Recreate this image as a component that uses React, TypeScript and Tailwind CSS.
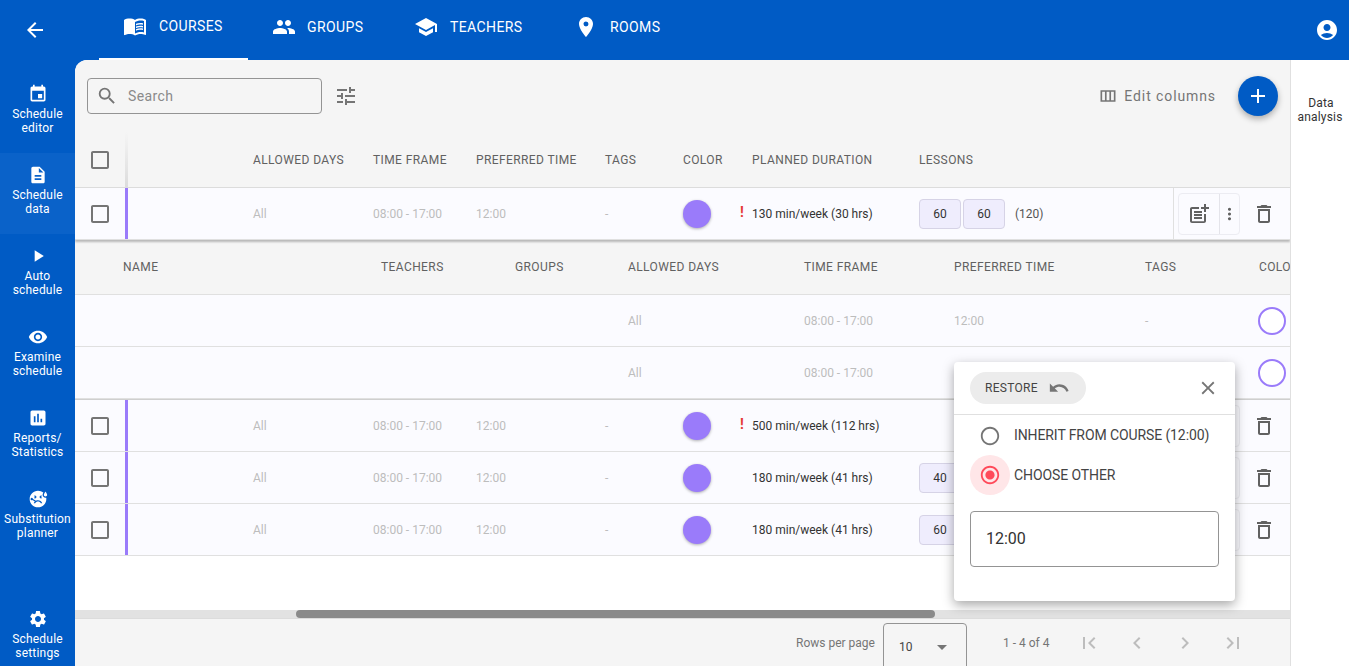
import {
  MdArrowBack,
  MdMenuBook,
  MdPeople,
  MdSchool,
  MdLocationOn,
  MdAccountCircle,
  MdEvent,
  MdDescription,
  MdPlayArrow,
  MdVisibility,
  MdAssessment,
  MdSick,
  MdSettings,
  MdSearch,
  MdTune,
  MdOutlineViewColumn,
  MdAdd,
  MdOutlinePostAdd,
  MdMoreVert,
  MdOutlineDelete,
  MdUndo,
  MdClose,
  MdFirstPage,
  MdChevronLeft,
  MdChevronRight,
  MdLastPage,
  MdArrowDropDown,
  MdCheckBoxOutlineBlank,
  MdRadioButtonUnchecked,
  MdRadioButtonChecked,
} from "react-icons/md";
import type { ReactNode } from "react";

const tabs = [
  { label: "COURSES", icon: <MdMenuBook size={24} />, cls: "w-[149px] pl-[24px] border-b-2 border-white", gap: "gap-[12px]" },
  { label: "GROUPS", icon: <MdPeople size={24} />, cls: "w-[166px] pl-[24px]", gap: "gap-[11px]" },
  { label: "TEACHERS", icon: <MdSchool size={24} />, cls: "w-[160px] pl-[0px]", gap: "gap-[12px]" },
  { label: "ROOMS", icon: <MdLocationOn size={24} />, cls: "w-[120px] pl-[0px]", gap: "gap-[12px]" },
];

const sideItems = [
  { icon: <MdEvent size={20} />, lines: ["Schedule", "editor"] },
  { icon: <MdDescription size={20} />, lines: ["Schedule", "data"], active: true },
  { icon: <MdPlayArrow size={20} />, lines: ["Auto", "schedule"] },
  { icon: <MdVisibility size={20} />, lines: ["Examine", "schedule"] },
  { icon: <MdAssessment size={20} />, lines: ["Reports/", "Statistics"] },
  { icon: <MdSick size={20} />, lines: ["Substitution", "planner"] },
];

const courseCols = "grid-cols-[50px_3px_125px_120px_103px_129px_78px_69px_167px_254px_117px]";
const lessonCols = "grid-cols-[48px_258px_134px_113px_176px_150px_191px_114px_31px]";

function SideItem({ icon, lines, active }: { icon: ReactNode; lines: string[]; active?: boolean }) {
  return (
    <div className={`flex h-[81px] flex-col items-center pt-[12px] text-white ${active ? "bg-[#0a62c9]" : ""}`}>
      {icon}
      <div className="mt-[3px] text-center text-[12px] leading-[14px] tracking-[0.2px]">
        {lines.map((l) => (
          <div key={l}>{l}</div>
        ))}
      </div>
    </div>
  );
}

function Lesson({ n, w = "w-[42px]" }: { n: number; w?: string }) {
  return (
    <span className={`flex h-[30px] ${w} items-center justify-center rounded-[4px] border border-[#d6d3e6] bg-[#efedfd] text-[12px] text-[#333]`}>
      {n}
    </span>
  );
}

function Muted({ children }: { children: ReactNode }) {
  return <span className="text-[12px] text-[#bdbdbd]">{children}</span>;
}

function CourseRow({
  duration,
  warn,
  lessons,
  total,
  shadow,
  actions,
}: {
  duration: string;
  warn?: boolean;
  lessons: number[];
  total?: string;
  shadow?: boolean;
  actions?: boolean;
}) {
  return (
    <div
      className={`grid h-[52px] ${courseCols} items-center border-b border-[#e0e0e0] bg-[#fbfbff] ${
        shadow ? "relative z-10 shadow-[0_2px_2px_rgba(0,0,0,0.25)]" : ""
      }`}
    >
      <span className="flex justify-center text-[#757575]">
        <MdCheckBoxOutlineBlank size={24} />
      </span>
      <span className="h-full bg-[#9a7bfa]" />
      <span />
      <Muted>All</Muted>
      <Muted>08:00 - 17:00</Muted>
      <Muted>12:00</Muted>
      <Muted>-</Muted>
      <span className="h-[28px] w-[28px] rounded-full bg-[#9a7bfa] shadow-[0_1px_3px_rgba(0,0,0,0.3)]" />
      <span className="relative text-[12px] text-[#333]">
        {warn && <span className="absolute left-[-12px] top-[-3px] text-[14px] font-bold text-[#e53935]">!</span>}
        {duration}
      </span>
      <span className="flex items-center gap-[2px]">
        {lessons.map((n, i) => (
          <Lesson key={i} n={n} />
        ))}
        {total && <span className="ml-[8px] text-[12px] text-[#555]">{total}</span>}
      </span>
      <span className="flex h-full items-center justify-between border-l border-[#e0e0e0] pl-[4px] pr-[14px]">
        {actions ? (
          <span className="flex h-[42px] items-center rounded-[4px] border border-[#ececf2]">
            <span className="flex h-full w-[41px] items-center justify-center border-r border-[#e4e4ea] text-[#616161]">
              <MdOutlinePostAdd size={24} />
            </span>
            <span className="flex h-full w-[19px] items-center justify-center text-[#616161]">
              <MdMoreVert size={20} />
            </span>
          </span>
        ) : (
          <span />
        )}
        <span className="text-[#616161]">
          <MdOutlineDelete size={24} />
        </span>
      </span>
    </div>
  );
}

function LessonRow({ tall }: { tall?: boolean }) {
  return (
    <div className={`grid ${tall ? "h-[52px]" : "h-[52px]"} ${lessonCols} items-center border-b border-[#e0e0e0] bg-[#fbfbff]`}>
      <span />
      <span />
      <span />
      <span />
      <Muted>All</Muted>
      <Muted>08:00 - 17:00</Muted>
      <Muted>12:00</Muted>
      <Muted>-</Muted>
      <span className="h-[28px] w-[28px] -translate-x-[1px] rounded-full border-2 border-[#9a7bfa] bg-white" />
    </div>
  );
}

function HeadCell({ children }: { children?: ReactNode }) {
  return <span className="whitespace-nowrap text-[12px] tracking-[0.4px] text-[#616161]">{children}</span>;
}

function Popup() {
  return (
    <div className="absolute left-[879px] top-[302px] z-20 h-[239px] w-[281px] rounded-[4px] bg-white shadow-[0_4px_12px_rgba(0,0,0,0.35)]">
      <div className="flex h-[53px] items-center justify-between border-b border-[#e0e0e0] pl-[16px] pr-[16px]">
        <span className="flex h-[32px] w-[116px] items-center gap-[10px] rounded-full bg-[#ececec] pl-[15px] text-[12px] tracking-[0.3px] text-[#444]">
          RESTORE
          <MdUndo size={22} className="text-[#757575]" />
        </span>
        <MdClose size={22} className="text-[#757575]" />
      </div>
      <div className="flex h-[40px] items-center gap-[13px] pl-[25px] pt-[1px] text-[14px] text-[#444]">
        <MdRadioButtonUnchecked size={22} className="text-[#757575]" />
        <span className="whitespace-nowrap text-[14px] tracking-[-0.1px]">INHERIT FROM COURSE (12:00)</span>
      </div>
      <div className="flex h-[40px] items-center gap-[4px] pl-[16px] text-[14px] text-[#444]">
        <span className="flex h-[40px] w-[40px] items-center justify-center rounded-full bg-[#ffe6e8] text-[#ff4a5a]">
          <MdRadioButtonChecked size={22} />
        </span>
        <span className="tracking-[-0.1px]">CHOOSE OTHER</span>
      </div>
      <div className="mx-[16px] mt-[16px] flex h-[56px] items-center rounded-[4px] border border-[#949494] pl-[15px] text-[16px] text-[#333]">
        12:00
      </div>
    </div>
  );
}

export default function App() {
  return (
    <div className="flex h-[666px] w-[1349px] flex-col overflow-hidden bg-[#005bc5] font-['Roboto',sans-serif]">
      {/* top bar */}
      <header className="flex h-[60px] shrink-0 text-white">
        <div className="flex w-[99px] items-center pl-[23px]">
          <MdArrowBack size={24} />
        </div>
        {tabs.map((t) => (
          <div key={t.label} className={`flex h-[60px] items-center ${t.gap} ${t.cls} pb-[6px] text-[14px] tracking-[0.4px]`}>
            {t.icon}
            <span>{t.label}</span>
          </div>
        ))}
        <div className="ml-auto flex items-center pr-[10px]">
          <MdAccountCircle size={24} />
        </div>
      </header>

      <div className="flex min-h-0 flex-1">
        {/* left nav */}
        <nav className="flex w-[75px] shrink-0 flex-col pt-[12px]">
          {sideItems.map((s) => (
            <SideItem key={s.lines[0] + s.lines[1]} {...s} />
          ))}
          <div className="mt-auto flex flex-col items-center pb-[6px] text-white">
            <MdSettings size={20} />
            <div className="mt-[3px] text-center text-[12px] leading-[14px] tracking-[0.2px]">
              <div>Schedule</div>
              <div>settings</div>
            </div>
          </div>
        </nav>

        {/* main */}
        <main className="relative flex w-[1215px] shrink-0 flex-col overflow-hidden rounded-tl-[12px] bg-white">
          <div className="flex h-[72px] shrink-0 items-center bg-[#f5f5f5] pl-[12px] pr-[12px]">
            <div className="flex h-[36px] w-[235px] items-center rounded-[4px] border border-[#949494] pl-[8px] text-[14px] tracking-[0.4px] text-[#8a8a8a]">
              <MdSearch size={22} className="text-[#757575]" />
              <span className="ml-[10px]">Search</span>
            </div>
            <MdTune size={24} className="ml-[12px] text-[#757575]" />
            <div className="ml-auto flex items-center text-[14px] tracking-[0.9px] text-[#757575]">
              <MdOutlineViewColumn size={20} />
              <span className="ml-[6px]">Edit columns</span>
            </div>
            <div className="ml-[22px] flex h-[40px] w-[40px] items-center justify-center rounded-full bg-[#005bc5] text-white shadow-[0_3px_6px_rgba(0,0,0,0.3)]">
              <MdAdd size={24} />
            </div>
          </div>

          {/* course header */}
          <div className={`grid h-[56px] shrink-0 ${courseCols} items-center border-b border-[#dcdcdc] bg-[#f5f5f5]`}>
            <span className="flex justify-center text-[#757575]">
              <MdCheckBoxOutlineBlank size={24} />
            </span>
            <span className="h-full bg-gradient-to-b from-[#f5f5f5] to-[#dcdcdc]" />
            <span />
            <HeadCell>ALLOWED DAYS</HeadCell>
            <HeadCell>TIME FRAME</HeadCell>
            <HeadCell>PREFERRED TIME</HeadCell>
            <HeadCell>TAGS</HeadCell>
            <HeadCell>COLOR</HeadCell>
            <HeadCell>PLANNED DURATION</HeadCell>
            <HeadCell>LESSONS</HeadCell>
            <span />
          </div>

          <CourseRow duration="130 min/week (30 hrs)" warn lessons={[60, 60]} total="(120)" shadow actions />

          {/* expanded lessons */}
          <div className={`grid h-[55px] shrink-0 ${lessonCols} items-center border-b border-[#e0e0e0] bg-[#f5f5f5]`}>
            <span />
            <HeadCell>NAME</HeadCell>
            <HeadCell>TEACHERS</HeadCell>
            <HeadCell>GROUPS</HeadCell>
            <HeadCell>ALLOWED DAYS</HeadCell>
            <HeadCell>TIME FRAME</HeadCell>
            <HeadCell>PREFERRED TIME</HeadCell>
            <HeadCell>TAGS</HeadCell>
            <HeadCell>COLOR</HeadCell>
          </div>
          <LessonRow />
          <LessonRow />
          <div className="h-[1px] shrink-0 bg-[#cfcfcf]" />

          <CourseRow duration="500 min/week (112 hrs)" warn lessons={[]} actions />
          <CourseRow duration="180 min/week (41 hrs)" lessons={[40, 40]} actions />
          <CourseRow duration="180 min/week (41 hrs)" lessons={[60, 60]} actions />

          <div className="flex-1 bg-white" />

          {/* scrollbar */}
          <div className="flex h-[8px] shrink-0 bg-[#e2e2e2]">
            <div className="ml-[221px] h-[8px] w-[639px] rounded-full bg-[#8a8a8a]" />
          </div>

          {/* pagination */}
          <div className="flex h-[48px] shrink-0 items-center border-t border-[#dcdcdc] bg-[#f5f5f5] pl-[721px] text-[12px] text-[#757575]">
            <span className="whitespace-nowrap">Rows per page</span>
            <div className="ml-[8px] mt-[9px] flex h-[48px] w-[84px] items-center justify-between rounded-t-[4px] border border-[#949494] pl-[15px] pr-[12px] text-[#444]">
              10
              <MdArrowDropDown size={24} className="text-[#757575]" />
            </div>
            <span className="ml-[36px] whitespace-nowrap">1 - 4 of 4</span>
            <div className="ml-[28px] flex gap-[24px] text-[#bdbdbd]">
              <MdFirstPage size={24} />
              <MdChevronLeft size={24} />
              <MdChevronRight size={24} />
              <MdLastPage size={24} />
            </div>
          </div>

          <Popup />
        </main>

        {/* analysis panel */}
        <aside className="relative flex-1 border-l border-[#e0e0e0] bg-white pt-[36px] text-center text-[12px] leading-[14px] tracking-[0.2px] text-[#333]">
          <div className="whitespace-nowrap pl-[2px]">Data</div>
          <div className="whitespace-nowrap">analysis</div>
        </aside>
      </div>
    </div>
  );
}
